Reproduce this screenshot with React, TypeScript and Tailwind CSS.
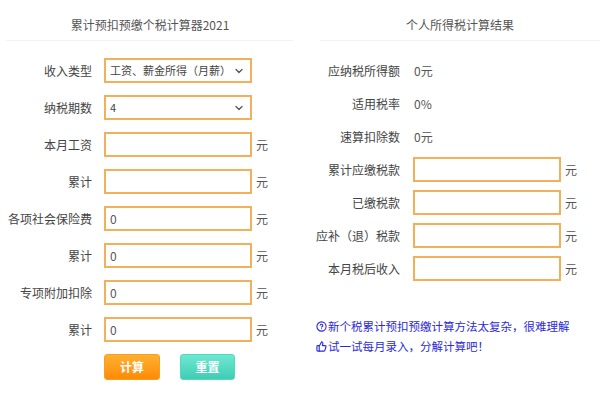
import { ChevronDown, CircleHelp, ThumbsUp } from "lucide-react";

const font = { fontFamily: '"Noto Sans CJK SC", "Noto Sans", sans-serif' };

const leftRows = [
  { label: "本月工资", value: "" },
  { label: "累计", value: "" },
  { label: "各项社会保险费", value: "0" },
  { label: "累计", value: "0" },
  { label: "专项附加扣除", value: "0" },
  { label: "累计", value: "0" },
];

const resultTexts = [
  { label: "应纳税所得额", value: "0元" },
  { label: "适用税率", value: "0%" },
  { label: "速算扣除数", value: "0元" },
];

const resultInputs = ["累计应缴税款", "已缴税款", "应补（退）税款", "本月税后收入"];

function Box({ value }: { value: string }) {
  return (
    <div className="w-[148px] h-[25px] border-2 border-[#f3b05a] flex items-center pl-[4px] text-[12px] text-[#555]">
      {value}
    </div>
  );
}

function Select({ value }: { value: string }) {
  return (
    <div className="w-[148px] h-[25px] border-2 border-[#f3b05a] flex items-center justify-between pl-[4px] pr-[5px] text-[11px] text-[#444]">
      <span className="whitespace-nowrap">{value}</span>
      <ChevronDown size={12} strokeWidth={2.6} className="shrink-0 text-[#555]" />
    </div>
  );
}

export default function App() {
  return (
    <main className="w-[600px] h-[396px] bg-white flex text-[12px] text-[#444]" style={font}>
      {/* left: form */}
      <section className="w-[300px] flex flex-col">
        <div className="h-[41px] pt-[10px] mx-[6px] flex items-center justify-center border-b border-[#f3f3f3] text-[12px] text-[#555]">
          累计预扣预缴个税计算器2021
        </div>
        <div className="mt-[17px] flex flex-col gap-[12px]">
          <div className="flex items-center">
            <div className="w-[92px] text-right">收入类型</div>
            <div className="ml-[12px]">
              <Select value="工资、薪金所得（月薪）" />
            </div>
          </div>
          <div className="flex items-center">
            <div className="w-[92px] text-right">纳税期数</div>
            <div className="ml-[12px]">
              <Select value="4" />
            </div>
          </div>
          {leftRows.map((r, i) => (
            <div key={i} className="flex items-center">
              <div className="w-[92px] text-right whitespace-nowrap">{r.label}</div>
              <div className="ml-[12px]">
                <Box value={r.value} />
              </div>
              <span className="ml-[4px] text-[#555]">元</span>
            </div>
          ))}
        </div>
        <div className="mt-[12px] ml-[104px] flex gap-[20px]">
          <button className="w-[56px] h-[26px] rounded-[3px] bg-gradient-to-b from-[#ffb02e] to-[#ff8a00] text-white text-[12px] font-bold border border-[#f5a020]">
            计算
          </button>
          <button className="w-[55px] h-[26px] rounded-[3px] bg-gradient-to-b from-[#6ee8d2] to-[#3ccdb3] text-white text-[12px] font-bold border border-[#55d8c0]">
            重置
          </button>
        </div>
      </section>

      {/* right: result */}
      <section className="w-[300px] flex flex-col">
        <div className="h-[41px] pt-[10px] ml-[20px] flex items-center justify-center border-b border-[#f3f3f3] text-[12px] text-[#555]">
          个人所得税计算结果
        </div>
        <div className="mt-[17px] flex flex-col gap-[8px]">
          {resultTexts.map((r, i) => (
            <div key={i} className="h-[25px] flex items-center">
              <div className="w-[100px] text-right">{r.label}</div>
              <div className="ml-[14px] text-[#555]">{r.value}</div>
            </div>
          ))}
          {resultInputs.map((l, i) => (
            <div key={i} className="flex items-center">
              <div className="w-[100px] text-right whitespace-nowrap">{l}</div>
              <div className="ml-[13px]">
                <Box value="" />
              </div>
              <span className="ml-[4px] text-[#555]">元</span>
            </div>
          ))}
        </div>
        <div className="mt-[35px] pl-[16px] text-[11.5px] leading-[20px] text-[#2a2ad8]">
          <div className="flex items-center whitespace-nowrap">
            <CircleHelp size={11} strokeWidth={2.4} className="mr-[1px]" />
            新个税累计预扣预缴计算方法太复杂，很难理解
          </div>
          <div className="flex items-center whitespace-nowrap">
            <ThumbsUp size={11} strokeWidth={2.4} className="mr-[1px]" />
            试一试每月录入，分解计算吧！
          </div>
        </div>
      </section>
    </main>
  );
}
